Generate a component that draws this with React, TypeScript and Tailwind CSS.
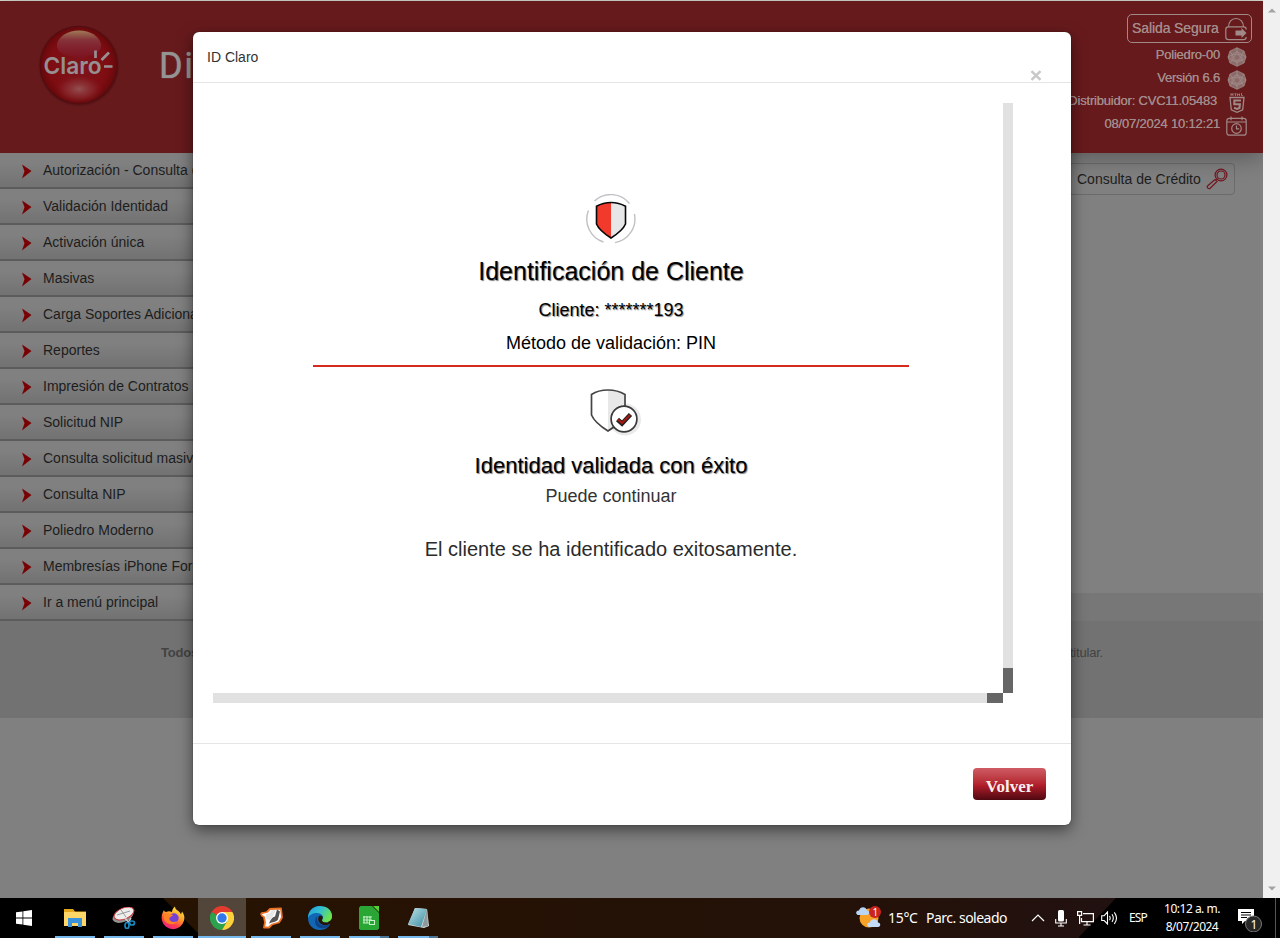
import React from "react";

const MENU = [
  "Autorización - Consulta de",
  "Validación Identidad",
  "Activación única",
  "Masivas",
  "Carga Soportes Adicionales",
  "Reportes",
  "Impresión de Contratos",
  "Solicitud NIP",
  "Consulta solicitud masiva",
  "Consulta NIP",
  "Poliedro Moderno",
  "Membresías iPhone Forever",
  "Ir a menú principal",
];

function ClaroLogo() {
  return (
    <svg className="mt-[21px] ml-[36px] shrink-0" width="86" height="86" viewBox="0 0 86 86">
      <defs>
        <radialGradient id="ball" cx="50%" cy="50%" r="50%">
          <stop offset="0" stopColor="#7d141b" />
          <stop offset="0.75" stopColor="#7e0d12" />
          <stop offset="0.93" stopColor="#6c090c" />
          <stop offset="1" stopColor="#4f0d10" />
        </radialGradient>
        <linearGradient id="gloss" x1="0" y1="0" x2="0" y2="1">
          <stop offset="0" stopColor="#a07a58" />
          <stop offset="0.35" stopColor="#86333a" />
          <stop offset="1" stopColor="#7d1527" stopOpacity="0.7" />
        </linearGradient>
        <radialGradient id="glow">
          <stop offset="0" stopColor="#935051" />
          <stop offset="0.6" stopColor="#87282d" stopOpacity="0.7" />
          <stop offset="1" stopColor="#7f1016" stopOpacity="0" />
        </radialGradient>
        <radialGradient id="halo">
          <stop offset="0.88" stopColor="#3f0a0d" />
          <stop offset="1" stopColor="#671a1c" stopOpacity="0" />
        </radialGradient>
      </defs>
      <circle cx="43" cy="44" r="42" fill="url(#halo)" />
      <circle cx="42.700" cy="43" r="39.200" fill="url(#ball)" />
      <path d="M21 22c2-8 11-13.500 22-13.500S63 14 65 22c1 8-8 13-22 13s-23-5-22-13z" fill="url(#gloss)" />
      <ellipse cx="43" cy="67" rx="25" ry="15" fill="url(#glow)" />
      <text x="7.500" y="52" fontFamily="Inter, sans-serif" fontWeight="600" fontSize="23" textLength="58" lengthAdjust="spacingAndGlyphs" fill="#969092">Claro</text>
      <path d="M59.500 28.500v7.500M65.500 38l7.500-7.500M68 44.500h8.500" stroke="#969092" strokeWidth="2.700" fill="none" />
    </svg>
  );
}

function Polyhedron() {
  return (
    <svg width="20" height="20" viewBox="0 0 20 20" fill="none" stroke="#a28f8c" strokeWidth="0.7">
      <path d="M10 .7l7 3.300 2 6-2 6L10 19.300 3 16l-2-6 2-6z" fill="#8b6b69" />
      <path d="M10 .7v4l-5 3L3 4M10 4.700l5 3L17 4M5 7.700v5.500L1 10zM15 7.700v5.500l4-3.200zM5 13.200L3 16M15 13.200l2 2.800M5 13.200l5 2.500 5-2.500M10 15.700v3.600M5 7.700h10l-5 8zM10 4.700L5 13.200h10z" />
    </svg>
  );
}

function LockIcon() {
  return (
    <svg width="22" height="24" viewBox="0 0 22 24" fill="none" stroke="#a08987" strokeWidth="1.200">
      <path d="M3.500 10C3.500 5 6.500 1.500 11 1.500S18.500 5 18.500 10" />
      <path d="M21.200 12.500c0-1.600-1-2.700-2.700-2.700h-15C1.800 9.800.8 11 .8 12.500v7.400c0 1.600 1 2.700 2.700 2.700h15c1.700 0 2.700-1 2.700-2.700" />
      <path d="M10.500 13.500h6V11l5 5-5 5v-2.500h-6z" fill="#a08987" stroke="none" />
    </svg>
  );
}

function Html5Icon() {
  return (
    <svg width="16" height="20" viewBox="0 0 16 20" fill="none" stroke="#a08987">
      <path d="M2 0v3M4 0v3M2 1.500h2M5.500 .7h2M6.500 1v2M8.500 3V.7l1 1.300 1-1.300V3M12.500 0v2.600H14" strokeWidth=".8" />
      <path d="M1 4.500h14l-1.300 12.300L8 19.300l-5.700-2.500z" strokeWidth="1.300" />
      <path d="M12 7.500H5.300v3.700h5.600l-.4 3.800L8 16l-3-1.200" strokeWidth="2" />
    </svg>
  );
}

function CalendarIcon() {
  return (
    <svg width="21" height="20" viewBox="0 0 21 20" fill="none" stroke="#a08987" strokeWidth="1.200">
      <rect x=".8" y="2.300" width="19.400" height="16.900" rx="2.500" />
      <path d="M1 6h19M5 .5v3.800M16 .5v3.800M10.500 9.500v3.300h2.700" />
      <circle cx="10.500" cy="12.500" r="4.800" />
    </svg>
  );
}

function InfoRow({ text, children }: { text: string; children: React.ReactNode }) {
  return (
    <div className="flex h-[23px] items-center justify-end text-[13px] tracking-[-0.2px] whitespace-nowrap text-[#a38b8b] [text-shadow:0_0_0.5px_#a38b8b]">
      <span className="-mt-[3px]">{text}</span>
      <span className="ml-1.5 flex w-[21px] items-center justify-center">{children}</span>
    </div>
  );
}

function Header() {
  return (
    <header className="relative flex h-[152px] justify-between bg-[#671a1c] shadow-[0_4px_22px_rgba(0,0,0,0.32)]">
      <div className="flex">
        <ClaroLogo />
        <h1 className="mt-[42px] ml-[37px] font-['Liberation_Sans_Narrow','Roboto'] text-[36px] leading-[46px] tracking-[1.6px] text-[#949494] [text-shadow:0_0_1px_#949494]">Dis</h1>
      </div>
      <div className="mr-[11px] flex w-[220px] flex-col items-end pt-[13px]">
        <div className="flex h-[29px] w-[125px] items-center justify-between rounded-[5px] border border-[#a08987] pr-1 pl-1 text-[14px] tracking-[-0.1px] whitespace-nowrap text-[#a38b8b] [text-shadow:0_0_0.5px_#a38b8b]">
          <span>Salida Segura</span>
          <LockIcon />
        </div>
        <div className="mt-[2px] pr-[5px]">
          <InfoRow text="Poliedro-00"><Polyhedron /></InfoRow>
          <InfoRow text="Versión 6.6"><Polyhedron /></InfoRow>
          <div className="[&_span:first-child]:mr-[3px]">
            <InfoRow text="Distribuidor: CVC11.05483"><Html5Icon /></InfoRow>
          </div>
          <InfoRow text="08/07/2024 10:12:21"><CalendarIcon /></InfoRow>
        </div>
      </div>
    </header>
  );
}

function Sidebar() {
  return (
    <nav className="relative w-[240px] overflow-hidden">
      {MENU.map((m) => (
        <div key={m} className="flex h-9 items-center border-b-2 border-[#5c5c5c] bg-linear-to-b from-[#808080] from-30% to-[#727272] pl-[22px]">
          <svg className="mt-[3px] shrink-0" width="10" height="15" viewBox="0 0 10 15">
            <path d="M0 .5L9.500 7 0 14.500 2.500 7.300z" fill="#7a0004" />
          </svg>
          <span className="ml-[11px] text-sm whitespace-nowrap text-[#1d1d1d]">{m}</span>
        </div>
      ))}
    </nav>
  );
}

function Scrollbar() {
  return (
    <div className="relative flex w-[17px] flex-col items-center justify-between bg-[#f0f0f0] pt-[8px] pb-[7px]">
      <svg width="8" height="5" viewBox="0 0 8 5"><path d="M0 4.500L4 .5l4 4z" fill="#a3a3a3" /></svg>
      <svg width="8" height="5" viewBox="0 0 8 5"><path d="M0 .5l4 4 4-4z" fill="#a3a3a3" /></svg>
    </div>
  );
}

function ShieldIcon() {
  return (
    <svg width="50" height="50" viewBox="0 0 50 50" fill="none">
      <path d="M8.500 7A24 24 0 0 1 43.500 9.500M2.400 16.500A24 24 0 0 0 17.500 48M29 48.600A24 24 0 0 0 48.400 20" stroke="#bfc1c4" strokeWidth="1.400" />
      <path d="M25 8.500c-5 0-10.500 1.500-14.500 3.800V30c2.500 6 9 10.500 14.500 14z" fill="#f23a2c" />
      <path d="M25 8.500c5 0 10.500 1.500 14.500 3.800V30c-2.500 6-9 10.500-14.500 14z" fill="#e7e7e7" />
      <path d="M25 8.500c-5 0-10.500 1.500-14.500 3.800V30c2.500 6 9 10.500 14.500 14 5.500-3.500 12-8 14.500-14V12.300C35.500 10 30 8.500 25 8.500z" stroke="#080808" strokeWidth="1.600" />
    </svg>
  );
}

function ShieldCheckIcon() {
  return (
    <svg className="ml-[8px]" width="54" height="50" viewBox="0 0 54 50" fill="none">
      <path d="M20 2.500c6 0 12 1.500 16.500 4V25c-3 7-9.500 14-16.500 18z" fill="#e8e8e8" />
      <circle cx="37" cy="31.500" r="16" fill="#eaeaea" />
      <path d="M20 2c-6 0-12 1.500-16.500 4.500V27c3 7 10 12 16.500 16 6.500-4 13.500-9 17-16V6.500C32 3.500 26 2 20 2z" stroke="#444" strokeWidth="1.700" />
      <circle cx="36" cy="31" r="12.900" fill="#fff" stroke="#3a3a3a" strokeWidth="1.700" />
      <path d="M29.500 31.500l4.500 4 8.500-9" stroke="#222" strokeWidth="4.500" />
      <path d="M30 31.500l4 3.500 8-8" stroke="#a51912" strokeWidth="2.200" />
    </svg>
  );
}

function Modal() {
  return (
    <section className="absolute top-[32px] left-[193px] flex h-[793px] w-[878px] flex-col rounded-[6px] bg-white shadow-[0_5px_15px_rgba(0,0,0,0.5),0_0_1px_rgba(0,0,0,0.8)]">
      <div className="flex h-[51px] justify-between border-b border-[#e5e5e5] pr-[29px] pl-[14px]">
        <span className="pt-[15px] text-sm text-[#333]">ID Claro</span>
        <svg className="mt-[38px]" width="12" height="11" viewBox="0 0 12 11"><path d="M1.500 1.200l9 8.600M10.500 1.200l-9 8.600" stroke="#c8c8c8" strokeWidth="2.500" /></svg>
      </div>
      <div className="h-[660px] px-5 pt-5">
        <div className="grid h-[600px] w-[800px] grid-cols-[790px_10px] grid-rows-[590px_10px]">
          <div className="flex flex-col items-center pt-[91px] pl-[6px] text-black">
            <ShieldIcon />
            <h2 className="mt-[9px] text-[25px] leading-[36px] [text-shadow:1px_1px_1px_#777]">Identificación de Cliente</h2>
            <p className="mt-[6px] text-[18px] leading-[30px] [text-shadow:1px_1px_1px_#888]">Cliente: *******193</p>
            <p className="mt-[3px] text-[18px] leading-[30px]">Método de validación: PIN</p>
            <div className="mt-[7px] mb-[21px] h-[2px] w-[596px] bg-[#d52b1e]" />
            <ShieldCheckIcon />
            <h3 className="mt-[12px] text-[22px] leading-[32px] [text-shadow:1px_1px_1px_#777]">Identidad validada con éxito</h3>
            <p className="text-[18px] leading-[28px] text-[#333]">Puede continuar</p>
            <p className="mt-[25px] text-[20px] leading-[28px] text-[#2b2b2b]">El cliente se ha identificado exitosamente.</p>
          </div>
          <div className="flex flex-col justify-end bg-[#e1e1e1]"><div className="h-[25px] bg-[#666]" /></div>
          <div className="flex justify-end bg-[#e1e1e1]"><div className="w-[16px] bg-[#666]" /></div>
        </div>
      </div>
      <div className="flex justify-end border-t border-[#e5e5e5] pt-[24px] pr-[25px]">
        <button className="h-[32px] w-[73px] rounded-[4px] bg-linear-to-b from-[#cf5b65] via-[#b01c29] via-55% to-[#4f0911] pt-[5px] font-['Liberation_Serif'] text-[17px] leading-[27px] font-bold text-[#f8eeee]">Volver</button>
      </div>
    </section>
  );
}

function TaskItem({ children, line, active }: { children: React.ReactNode; line: string; active?: boolean }) {
  return (
    <div className={active ? "flex w-[48px] flex-col items-center justify-between bg-[#52463a]" : "flex w-[40px] flex-col items-center justify-between"}>
      <div className="flex h-[38px] items-center pt-[2px]">{children}</div>
      <div className={line} />
    </div>
  );
}

const LINE = "h-[2px] w-full bg-[#76b9ed]";
const LINE_STACK = "h-[2px] w-full bg-linear-to-r from-[#76b9ed] from-78% to-[#4c7596] to-78%";

function Taskbar() {
  return (
    <footer className="relative flex h-10 justify-between bg-black font-['Noto_Sans','Open_Sans',sans-serif] text-white">
      <svg className="absolute inset-0" width="1280" height="40">
        <defs><linearGradient id="tb"><stop offset="0" stopColor="#261301" /><stop offset=".7" stopColor="#241108" /><stop offset="1" stopColor="#211110" /></linearGradient></defs>
        <path d="M163 0H1116L1079 39V40H203z" fill="url(#tb)" />
      </svg>
      <div className="relative flex">
        <div className="flex w-[55px] items-center pl-4">
          <svg width="16" height="16" viewBox="0 0 16 16" fill="#fff"><path d="M0 2.300l6.500-.9v6.200H0zM7.300 1.300L16 0v7.600H7.300zM0 8.400h6.500v6.200L0 13.700zM7.300 8.400H16V16l-8.700-1.300z" /></svg>
        </div>
        <div className="flex gap-[9px]">
          <TaskItem line={LINE}>
            <svg width="22" height="18" viewBox="0 0 22 18"><path d="M0 0h9l2 2.500h11V17H0z" fill="#e5a81c" /><path d="M0 3h22v14H0z" fill="#fdd667" /><path d="M4 9h14v9h-4v-4H8v4H4z" fill="#3b92dc" /></svg>
          </TaskItem>
          <TaskItem line={LINE}>
            <svg width="24" height="22" viewBox="0 0 24 22" fill="none"><ellipse cx="11" cy="9" rx="11" ry="6" transform="rotate(-22 11 9)" fill="#929292" /><ellipse cx="12" cy="6.500" rx="10.500" ry="5.500" transform="rotate(-22 12 6.500)" fill="#eee" stroke="#cc3338" /><path d="M5 8l13-4M9 3l5 7" stroke="#999" /><path d="M13 11l5 6M19 11l-3 5" stroke="#ccc" strokeWidth="1.500" /><ellipse cx="15" cy="18.500" rx="2" ry="3" stroke="#1788c0" strokeWidth="1.700" /><ellipse cx="20" cy="16" rx="2.500" ry="2" stroke="#1788c0" strokeWidth="1.700" /></svg>
          </TaskItem>
          <TaskItem line={LINE}>
            <svg width="24" height="24" viewBox="0 0 24 24"><defs><linearGradient id="fx" x1=".8" y1="0" x2=".3" y2="1"><stop offset="0" stopColor="#fff04a" /><stop offset=".45" stopColor="#ff9a26" /><stop offset=".75" stopColor="#ff3d4b" /><stop offset="1" stopColor="#e5208b" /></linearGradient></defs><path d="M3 4c0 1 1 2 2 2 2-1 4-1 6 0 0-2 1-4 3-5.500 0 4 5 4 6 8l1-3c2 3 3 5 2 9a11.300 11.300 0 0 1-22 0C0 11 1 7 3 4z" fill="url(#fx)" /><circle cx="13" cy="12" r="4.700" fill="#7542d8" /><path d="M3 8c3-2 6 0 9 1-1 2-4 2-4 4 1 3 5 4 8 2-2 5-10 4-13-1z" fill="#ff8226" /></svg>
          </TaskItem>
          <div className="-mx-1 flex">
            <TaskItem line={LINE} active>
              <svg width="24" height="24" viewBox="0 0 24 24"><path d="M12 12L1.600 6A12 12 0 0 1 22.400 6z" fill="#e33b2e" /><path d="M12 12L1.600 6A12 12 0 0 0 12 24l5.200-9z" fill="#2ca24c" /><path d="M12 6h10.400A12 12 0 0 1 12 24l5.200-9z" fill="#fdd13c" /><circle cx="12" cy="12" r="6" fill="#fff" /><circle cx="12" cy="12" r="4.700" fill="#3378e8" /></svg>
            </TaskItem>
          </div>
          <TaskItem line={LINE}>
            <svg width="24" height="22" viewBox="0 0 24 22"><path d="M5 10c-3-1-4-4-1-4l4-1 3-3 11-.5 1 9-3 5-7 2-3 3H5l1-5z" fill="#fff" stroke="#ed7224" strokeWidth="1.800" strokeLinejoin="round" /><path d="M18 2.500l3 2-2 8c-2 3-5 2-9 4 1-2 2-6 6-7z" fill="#555" /><path d="M7 7l4-1 2-3h4l-3 6-3 4-4-1z" fill="#e8e8e8" /></svg>
          </TaskItem>
          <TaskItem line={LINE}>
            <svg width="24" height="24" viewBox="0 0 24 24"><defs><linearGradient id="eg" x1="0" y1="0" x2="1" y2=".5"><stop offset="0" stopColor="#219bdd" /><stop offset=".5" stopColor="#32bed1" /><stop offset="1" stopColor="#6ce24d" /></linearGradient></defs><path d="M12 0C4 0 0 6 0 12s4 12 12 12c5 0 9-3 10-6l-4-3 6-2V8z" fill="#1267b5" /><path d="M0 12C0 5 5 0 12 0s12 4 12 10c0 5-4 7-8 6-2 0-3-1-2-2 3-4-1-7-5-7-4 0-8 2-9 5z" fill="url(#eg)" /><path d="M9.500 10c-2 6 3 12 12.500 8.500-3 6-15 5-15-3 0-3 1-4.500 2.500-5.500z" fill="#0f4488" /><path d="M11 10c3-1 5 1 3 4 0 2 2 3 8 2.500 1 1-1 2-3 2.500-6 1-11-4-8-9z" fill="#261404" /></svg>
          </TaskItem>
          <TaskItem line={LINE_STACK}>
            <svg width="20" height="24" viewBox="0 0 20 24"><path d="M1.500 0H13l7 7v15.500L18.500 24h-17L0 22.500v-21z" fill="#2aa635" /><path d="M14 0h6v6z" fill="#54cf35" /><path d="M4 11h9M4 14h9M4 17h7M5 10v7M8 10v7M11 10v4" stroke="#c8f0ca" strokeWidth="1.100" /><rect x="10.500" y="14.500" width="5" height="4" fill="none" stroke="#c8f0ca" /></svg>
          </TaskItem>
          <TaskItem line={LINE_STACK}>
            <svg width="22" height="22" viewBox="0 0 22 22"><defs><linearGradient id="np" x1="0" y1="0" x2="1" y2="1"><stop offset="0" stopColor="#bfe3ea" /><stop offset="1" stopColor="#388aa0" /></linearGradient></defs><path d="M8 1l12 1 2 17-5 2-16-3z" fill="#d6dcdd" /><path d="M8 1l12 1-6 18-13-3z" fill="url(#np)" /><path d="M20 2l1 17-6 1z" fill="#8d9a9d" /></svg>
          </TaskItem>
        </div>
      </div>
      <div className="relative flex items-center">
        <svg className="-mt-[2px]" width="26" height="24" viewBox="0 0 26 24"><circle cx="13" cy="13" r="9.500" fill="#f8a127" /><path d="M2 10C-1 9 0 5 3 5.500 4 1 10 1 11 5.500c3 0 3 4.500 0 4.500z" fill="#b8d5f5" /><path d="M13 22c-3-1-2-5 1-4.500 1-4.500 7-4 8 0 3 0 3 4.500 0 4.500z" fill="#c3daf8" /><circle cx="19" cy="7" r="6" fill="#c9251e" /><text x="16.500" y="10.800" fontSize="10" fill="#fff">1</text></svg>
        <span className="ml-[6px] w-[38px] text-[14px] tracking-[-0.3px] -mt-[2px]">15°C</span>
        <span className="w-[105px] text-[14px] tracking-[-0.5px] whitespace-nowrap -mt-[2px]">Parc. soleado</span>
        <svg width="14" height="8" viewBox="0 0 14 8" fill="none" stroke="#fff" strokeWidth="1.200"><path d="M1 7l6-6 6 6" /></svg>
        <svg className="ml-[10px]" width="12" height="17" viewBox="0 0 12 17"><rect x="3" y="0" width="6" height="11.500" rx="1.500" fill="#fff" /><path d="M.7 9v4h10.600V9M6 13v3M3 16h6" fill="none" stroke="#fff" strokeWidth="1.100" /></svg>
        <svg className="ml-[10px]" width="17" height="15" viewBox="0 0 17 15" fill="none" stroke="#fff" strokeWidth="1.200"><path d="M6 2.600h10.400v8H4.500V7M10 11v3M6.500 14h7M.6.600h4v3.800h-4zM2.600 4.500V13" /></svg>
        <svg className="ml-[7px]" width="17" height="14" viewBox="0 0 17 14" fill="none" stroke="#fff" strokeWidth="1.100"><path d="M.7 4.700h2.500L6.500 1v12L3.200 9.500H.7zM8.500 5c.8 1.200.8 3 0 4.200M11 3.200c1.700 2.500 1.700 5.200 0 7.700M13.300 1.300c2.700 3.500 2.700 8 0 11.500" /></svg>
        <span className="ml-[11px] w-[20px] text-[12px] tracking-[-0.9px]">ESP</span>
        <div className="ml-[10px] w-[66px] text-center text-[12px] leading-[18px] tracking-[-0.5px]">10:12 a. m.<br />8/07/2024</div>
        <svg className="mt-[2px] ml-[13px]" width="25" height="26" viewBox="0 0 25 26"><path d="M0 3h16v12H7l-3 3v-3H0z" fill="#fff" /><path d="M3 6.500h10M3 9h10M3 11.500h6" stroke="#000" /><circle cx="15.500" cy="18" r="8" fill="#262626" stroke="#777" /><text x="12.500" y="22.500" fontSize="12" fill="#fff">1</text></svg>
        <div className="ml-[12px] h-10 w-[5px] border-l border-[#555]" />
      </div>
    </footer>
  );
}

export default function App() {
  return (
    <div className="relative flex h-[938px] w-[1280px] flex-col overflow-hidden bg-[#808080] font-['Liberation_Sans',Arial,sans-serif]">
      <div className="flex h-[898px]">
        <div className="flex w-[1263px] flex-col">
          <div className="h-px bg-[#d9ddd6]" />
          <Header />
          <div className="flex h-[468px]">
            <Sidebar />
            <main className="flex flex-1 flex-col justify-between">
              <div className="mt-[10px] mr-[28px] flex h-8 w-[166px] items-center justify-between self-end rounded border border-[#6b6b6b] pr-[6px] pl-[7px] text-sm text-[#1d1d1d]">
                <span className="whitespace-nowrap">Consulta de Crédito</span>
                <svg width="22" height="22" viewBox="0 0 22 22" fill="none" stroke="#71161f" strokeWidth="1.200"><circle cx="15" cy="7" r="5.900" /><circle cx="15" cy="7" r="4" /><path d="M10.500 10.500l1.300 1.300M9 11.500l2 2-7 7c-1.500.8-3.500-1-2.500-2.500z" /></svg>
              </div>
              <div className="h-7 bg-[#777]" />
            </main>
          </div>
          <div className="flex h-[97px] justify-between bg-[#727272] pt-[24px] pr-[160px] pl-[161px] text-[13px] leading-4 tracking-[-0.2px] whitespace-nowrap text-[#434343]">
            <b>Todos los derechos reservados.</b>
            <span>Prohibida su reproducción sin autorización de su titular.</span>
          </div>
        </div>
        <Scrollbar />
      </div>
      <Taskbar />
      <Modal />
    </div>
  );
}
